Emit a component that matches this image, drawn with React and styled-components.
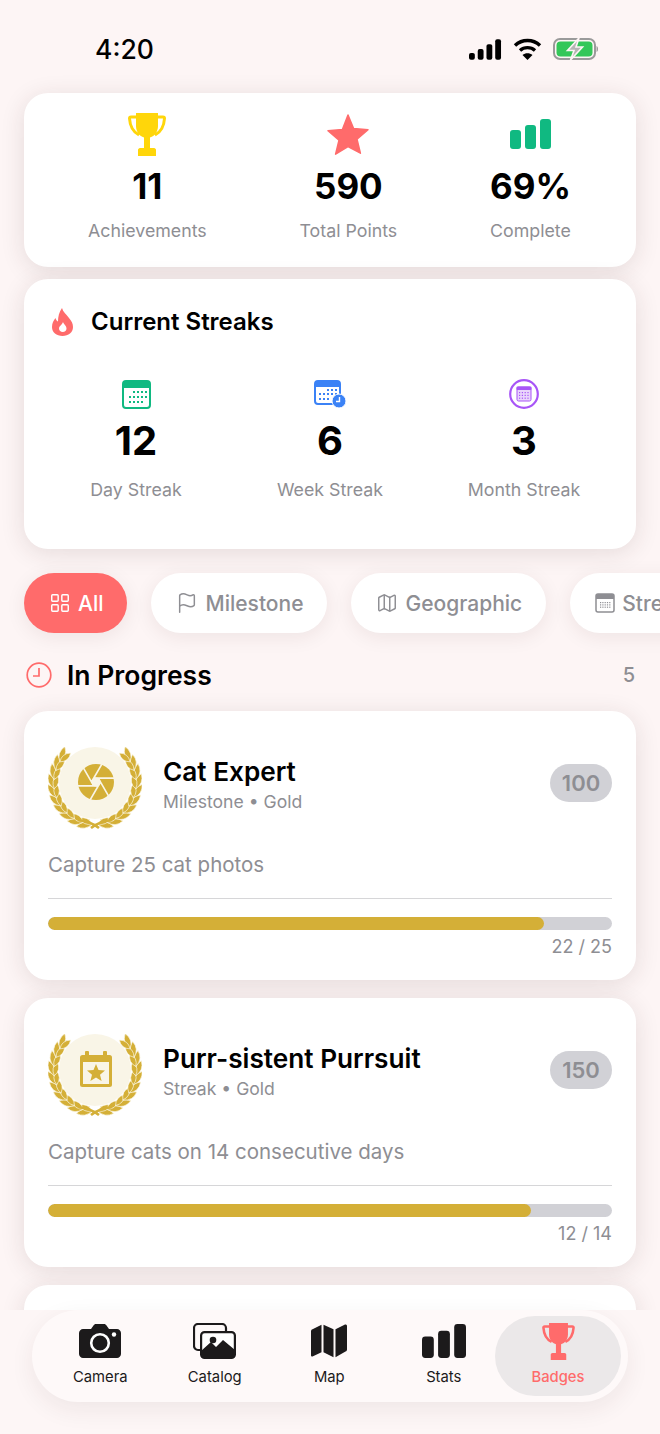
import React from 'react';
import styled, { createGlobalStyle } from 'styled-components';
import { LayoutGrid, Flag, Map as MapIcon } from 'lucide-react';

const GOLD = '#d4af37';
const CREAM = '#f9f5e7';
const CORAL = '#ff6b6b';

const GlobalStyle = createGlobalStyle`
	html, body {
		margin: 0;
		padding: 0;
		background: #fdf5f5;
	}
	* {
		box-sizing: border-box;
	}
`;

const Page = styled.div`
	position: relative;
	width: 660px;
	height: 1434px;
	overflow: hidden;
	background: #fdf5f5;
	font-family: Inter, 'Noto Sans', sans-serif;
	color: #000;
`;

const StatusBar = styled.div`
	height: 93px;
	padding: 34px 61px 0 95px;
	display: flex;
	justify-content: space-between;
	align-items: flex-start;
`;

const Time = styled.div`
	font-size: 26.5px;
	line-height: 30px;
	font-weight: 500;
`;

const StatusIcons = styled.div`
	display: flex;
	align-items: center;
	gap: 11px;
	padding-top: 4px;
`;

const Card = styled.div`
	margin: 0 24px;
	background: #fff;
	border-radius: 24px;
	box-shadow: 0 4px 24px rgba(60, 30, 30, 0.12);
`;

const SummaryCard = styled(Card)`
	height: 174px;
	padding: 19px 65px 0 64px;
	display: flex;
	justify-content: space-between;
`;

const Summary = styled.div`
	display: flex;
	flex-direction: column;
	align-items: center;
`;

const IconSlot = styled.div`
	height: 44px;
	display: flex;
	align-items: center;
	justify-content: center;
`;

const SummaryValue = styled.div`
	font-size: 35px;
	line-height: 42px;
	font-weight: 700;
	margin-top: 9px;
`;

const Label = styled.div`
	font-size: 17.8px;
	line-height: 22px;
	font-weight: 400;
	color: #8e8e93;
	margin-top: ${(p) => p.$top || 13}px;
`;

const StreakCard = styled(Card)`
	height: 270px;
	margin-top: 12px;
	padding: 28px 15px 0;
`;

const StreakTitle = styled.div`
	display: flex;
	align-items: center;
	gap: 17px;
	padding-left: 13px;
	font-size: 24px;
	line-height: 30px;
	font-weight: 600;
`;

const StreakGrid = styled.div`
	display: grid;
	grid-template-columns: repeat(3, 1fr);
	margin-top: 41px;
`;

const Streak = styled.div`
	display: flex;
	flex-direction: column;
	align-items: center;
`;

const StreakIcon = styled.div`
	height: 32px;
	display: flex;
	align-items: center;
	justify-content: center;
`;

const StreakValue = styled.div`
	font-size: 40px;
	line-height: 48px;
	font-weight: 700;
	margin-top: 7px;
`;

const ChipRow = styled.div`
	display: flex;
	gap: 24px;
	padding: 24px 0 20px 24px;
	overflow: hidden;
`;

const Chip = styled.div`
	flex-shrink: 0;
	height: 60px;
	padding: 0 24px 0 25px;
	display: flex;
	align-items: center;
	gap: 7px;
	border-radius: 30px;
	font-size: 21px;
	font-weight: 500;
	color: ${(p) => (p.$active ? '#fff' : '#8e8e93')};
	background: ${(p) => (p.$active ? CORAL : '#fff')};
	box-shadow: 0 4px 20px rgba(60, 30, 30, 0.08);
`;

const SectionHead = styled.div`
	display: flex;
	align-items: center;
	gap: 15px;
	height: 44px;
	padding: 0 25px 0 26px;
	margin-bottom: 14px;
	font-size: 26.5px;
	font-weight: 600;
`;

const Count = styled.span`
	margin-left: auto;
	font-size: 20px;
	font-weight: 500;
	color: #8e8e93;
`;

const BadgeCard = styled(Card)`
	height: 269px;
	margin-bottom: 18px;
	padding: 36px 24px 0;
`;

const BadgeTop = styled.div`
	display: flex;
	align-items: flex-start;
`;

const BadgeText = styled.div`
	margin-left: 21px;
	padding-top: 7px;
`;

const BadgeName = styled.div`
	font-size: 26.2px;
	line-height: 36px;
	font-weight: 600;
`;

const BadgeMeta = styled.div`
	font-size: 17.6px;
	line-height: 24px;
	color: #8e8e93;
`;

const Points = styled.div`
	margin-left: auto;
	margin-top: 17px;
	height: 38px;
	width: 62px;
	border-radius: 19px;
	background: #d1d1d6;
	color: #8e8e93;
	font-size: 22px;
	font-weight: 600;
	display: flex;
	align-items: center;
	justify-content: center;
`;

const Description = styled.div`
	font-size: 20.5px;
	line-height: 26px;
	color: #8e8e93;
	margin-top: 23px;
`;

const Divider = styled.div`
	height: 1px;
	background: #d6d6d8;
	margin-top: 20px;
`;

const Track = styled.div`
	height: 13px;
	border-radius: 7px;
	background: #d1d1d6;
	margin-top: 18px;
	overflow: hidden;
`;

const Fill = styled.div`
	height: 100%;
	border-radius: 7px;
	background: ${GOLD};
`;

const Progress = styled.div`
	font-size: 18px;
	line-height: 22px;
	color: #8e8e93;
	text-align: right;
	margin-top: 6px;
`;

const BottomArea = styled.div`
	position: absolute;
	left: 0;
	right: 0;
	bottom: 0;
	height: 124px;
	background: #fdf6f6;
`;

const TabPill = styled.div`
	margin-left: 32px;
	width: 596px;
	height: 92px;
	padding: 6px 0 6px 11px;
	display: flex;
	border-radius: 46px;
	background: #fef9f9;
	box-shadow: 0 8px 24px rgba(60, 30, 30, 0.07);
`;

const Tab = styled.div`
	width: ${(p) => (p.$active ? 126 : 114.5)}px;
	margin: 0 ${(p) => (p.$active ? -6 : 0)}px;
	display: flex;
	flex-direction: column;
	align-items: center;
	justify-content: flex-start;
	padding-top: 4px;
	border-radius: 40px;
	background: ${(p) => (p.$active ? '#ebe8e9' : 'transparent')};
	color: ${(p) => (p.$active ? CORAL : '#1c1a1b')};
	font-size: 14.8px;
	font-weight: ${(p) => (p.$active ? 500 : 400)};
`;

const TabIcon = styled.div`
	height: 42px;
	display: flex;
	align-items: center;
	justify-content: center;
`;

const TabLabel = styled.div`
	line-height: 18px;
	margin-top: 6px;
`;

const Signal = () => (
	<svg width="33" height="21" viewBox="0 0 34 21">
		<rect x="0" y="14" width="6" height="7" rx="2" fill="#000" />
		<rect x="9" y="10" width="6" height="11" rx="2" fill="#000" />
		<rect x="18" y="5" width="6" height="16" rx="2" fill="#000" />
		<rect x="27" y="0" width="6" height="21" rx="2" fill="#000" />
	</svg>
);

const Wifi = () => (
	<svg width="29" height="22" viewBox="0 0 28 22" fill="none" stroke="#000" strokeWidth="3.4">
		<path d="M1.5 7.5C8.5 .8 19.5 .8 26.5 7.5" />
		<path d="M6.5 12.5c4.2-3.8 10.8-3.8 15 0" />
		<path d="M14 22l-5-5c2.8-2.4 7.2-2.4 10 0z" fill="#000" stroke="none" />
	</svg>
);

const Battery = () => (
	<svg width="46" height="22" viewBox="0 0 46 22">
		<rect x="1" y="1" width="41" height="20" rx="6" fill="none" stroke="#9a9a9a" strokeWidth="2" />
		<rect x="3.5" y="3.5" width="36" height="15" rx="4" fill="#34c759" />
		<path d="M43.5 8c2 .5 2 5.500 0 6z" fill="#9a9a9a" />
		<path d="M26 0L14.500 12.500H21L17.500 22 29.500 9H23z" fill="#b5b5b5" stroke="#fdf5f5" strokeWidth="1.600" />
	</svg>
);

const Trophy = ({ color, width = 38, height = 43 }) => (
	<svg width={width} height={height} viewBox="0 0 38 43">
		<path d="M8 0h22v13c0 7-5 12-11 12S8 20 8 13z" fill={color} />
		<path
			d="M9 4H3c-1 0-1.500.5-1.500 1.500C2 13 5 19 11 22M29 4h6c1 0 1.500.5 1.500 1.500C36 13 33 19 27 22"
			fill="none"
			stroke={color}
			strokeWidth="3"
		/>
		<rect x="16" y="23" width="6" height="12" fill={color} />
		<path d="M10 43v-6c0-1 .8-2 2-2h14c1.200 0 2 1 2 2v6z" fill={color} />
	</svg>
);

const Star = () => (
	<svg width="42" height="41" viewBox="0 0 42 41">
		<path
			d="M21 1l5.600 13.600 14.400 1.100-11 9.400 3.400 14.100L21 32.600 8.600 40.200 12 26.100 1 16.700l14.400-1.100z"
			fill={CORAL}
			stroke={CORAL}
			strokeWidth="1.500"
			strokeLinejoin="round"
		/>
	</svg>
);

const Bars = ({ color, width = 41, height = 30, radius = 3 }) => (
	<svg width={width} height={height} viewBox="0 0 41 30" preserveAspectRatio="none">
		<rect x="0" y="11" width="11" height="19" rx={radius} fill={color} />
		<rect x="15" y="6" width="11" height="24" rx={radius} fill={color} />
		<rect x="30" y="0" width="11" height="30" rx={radius} fill={color} />
	</svg>
);

const Flame = () => (
	<svg width="22" height="28" viewBox="0 0 22 28">
		<path
			d="M10 0c1 4 4 6 7 10 2.500 3 4 5.500 4 9 0 5.500-4.500 9-10.500 9S0 24.500 0 19c0-4 1.500-6.500 3.500-9 .5 2 1.300 3 2.500 3.500C6 9 7 4 10 0z"
			fill={CORAL}
		/>
		<path d="M11 14c.6 2 3.500 3.500 3.500 6.500 0 2.200-1.600 3.500-3.700 3.500S7 22.700 7 20.500c0-2.500 3-3.500 4-6.500z" fill="#fff" />
	</svg>
);

const dots = (x0, y0, cols, rows, step, r, fill) => {
	const out = [];
	for (let j = 0; j < rows; j++) {
		for (let i = 0; i < cols; i++) {
			out.push(<rect key={`${i}-${j}`} x={x0 + i * step} y={y0 + j * step} width={r} height={r} fill={fill} />);
		}
	}
	return out;
};

const CalendarDay = () => (
	<svg width="29" height="29" viewBox="0 0 29 29">
		<rect x="1" y="1" width="27" height="27" rx="3" fill="#fff" stroke="#10b981" strokeWidth="2" />
		<path d="M1 8V4a3 3 0 0 1 3-3h21a3 3 0 0 1 3 3v4z" fill="#10b981" />
		{dots(11, 11, 4, 1, 4, 2, '#10b981')}
		{dots(7, 16, 5, 1, 4, 2, '#10b981')}
		{dots(7, 21, 4, 1, 4, 2, '#10b981')}
	</svg>
);

const CalendarWeek = () => (
	<svg width="32" height="28" viewBox="0 0 32 28">
		<rect x="1" y="1" width="25" height="23" rx="3" fill="#fff" stroke="#3b82f6" strokeWidth="2" />
		<path d="M1 7V4a3 3 0 0 1 3-3h19a3 3 0 0 1 3 3v3z" fill="#3b82f6" />
		{dots(13, 9, 3, 1, 4, 2, '#3b82f6')}
		{dots(5, 13, 5, 1, 4, 2, '#3b82f6')}
		{dots(5, 18, 3, 1, 4, 2, '#3b82f6')}
		<circle cx="25" cy="21" r="7" fill="#3b82f6" stroke="#fff" strokeWidth="1" />
		<path d="M25.500 17v4.500H22" fill="none" stroke="#fff" strokeWidth="1.400" />
	</svg>
);

const CalendarMonth = () => (
	<svg width="30" height="30" viewBox="0 0 30 30">
		<circle cx="15" cy="15" r="13.800" fill="#fff" stroke="#a855f7" strokeWidth="2.200" />
		<rect x="8" y="8" width="14" height="14" rx="1.500" fill="#e9d5fb" stroke="#a855f7" strokeWidth="1" />
		<rect x="7.500" y="7.500" width="15" height="3.500" rx="1" fill="#a855f7" />
		{dots(10, 13, 4, 3, 2.800, 1.200, '#a855f7')}
	</svg>
);

const CalendarChip = () => (
	<svg width="20" height="20" viewBox="0 0 20 20">
		<rect x="1" y="1" width="18" height="18" rx="2" fill="#fff" stroke="#8e8e93" strokeWidth="1.500" />
		<path d="M1 6V3a2 2 0 0 1 2-2h14a2 2 0 0 1 2 2v3z" fill="#8e8e93" />
		{dots(5, 9, 5, 3, 2.300, 1.200, '#8e8e93')}
	</svg>
);

const ProgressClock = () => (
	<svg width="26" height="26" viewBox="0 0 26 26" fill="none" stroke={CORAL} strokeWidth="1.700">
		<circle cx="13" cy="13" r="11.800" />
		<path d="M13 6v8H7" />
	</svg>
);

// one laurel leaf, a lens from base to tip
const leaf = (x, y, angle, len, width) => {
	const rad = (angle * Math.PI) / 180;
	const tipX = x + Math.cos(rad) * len;
	const tipY = y + Math.sin(rad) * len;
	const nx = -Math.sin(rad) * width;
	const ny = Math.cos(rad) * width;
	const midX = (x + tipX) / 2;
	const midY = (y + tipY) / 2;
	const f = (n) => n.toFixed(2);
	return `M${f(x)} ${f(y)}Q${f(midX + nx)} ${f(midY + ny)} ${f(tipX)} ${f(tipY)}Q${f(midX - nx)} ${f(midY - ny)} ${f(x)} ${f(y)}z`;
};

// leaves run along an arc, the left side is the same group mirrored
const wreathLeaves = () => {
	const out = [];
	const R = 41;
	for (let i = 0; i < 10; i++) {
		const a = 176 - i * 13;
		const rad = (a * Math.PI) / 180;
		const x = 47 + Math.sin(rad) * R;
		const y = 36 - Math.cos(rad) * R;
		const tangent = a - 180;
		out.push(leaf(x, y, tangent + 13, 16, 6));
		out.push(leaf(x, y, tangent - 20, 14, 5.5));
	}
	return out;
};

const LEAVES = wreathLeaves();

const Laurel = () => (
	<g fill={GOLD} stroke="#fbf6e4" strokeWidth="0.7">
		{LEAVES.map((d, i) => (
			<path key={i} d={d} />
		))}
	</g>
);

const Wreath = ({ children }) => (
	<svg width="94" height="82" viewBox="0 0 94 82" style={{ flexShrink: 0 }}>
		<Laurel />
		<g transform="translate(94 0) scale(-1 1)">
			<Laurel />
		</g>
		<path d="M30 73c8 1 15 3 21 8M64 73c-8 1-15 3-21 8" fill="none" stroke={GOLD} strokeWidth="2.600" />
		<circle cx="47" cy="36" r="36" fill={CREAM} />
		{children}
	</svg>
);

const slitLines = () => {
	const out = [];
	for (let k = 0; k < 6; k++) {
		const a = (k * 60 * Math.PI) / 180;
		const b = ((k * 60 + 120) * Math.PI) / 180;
		const x = 12 + Math.cos(a) * 3;
		const y = 12 + Math.sin(a) * 3;
		out.push(`M${x.toFixed(2)} ${y.toFixed(2)}L${(x + Math.cos(b) * 14).toFixed(2)} ${(y + Math.sin(b) * 14).toFixed(2)}`);
	}
	return out.join('');
};

const SLITS = slitLines();

const Aperture = () => (
	<g transform="translate(30 17) scale(1.5)">
		<circle cx="12" cy="12" r="12" fill={GOLD} />
		<circle cx="12" cy="12" r="3" fill={CREAM} />
		<path d={SLITS} fill="none" stroke={CREAM} strokeWidth="1.100" />
	</g>
);

const CalendarStar = () => (
	<g>
		<rect x="32" y="21" width="32" height="32" rx="2.500" fill={GOLD} />
		<rect x="37" y="17" width="4" height="6" rx="1" fill={GOLD} />
		<rect x="55" y="17" width="4" height="6" rx="1" fill={GOLD} />
		<rect x="35" y="28" width="26" height="22" fill={CREAM} />
		<path d="M48 30l2.500 6 6.500.5-5 4.300 1.600 6.300-5.600-3.500-5.600 3.500 1.600-6.300-5-4.300 6.500-.5z" fill={GOLD} />
	</g>
);

const Camera = () => (
	<svg width="42" height="34" viewBox="0 0 42 34">
		<path
			d="M4 5h8l2.500-3.500c.6-1 1.500-1.500 2.500-1.500h8c1 0 1.900.5 2.500 1.500L30 5h8c2 0 4 2 4 4v21c0 2-2 4-4 4H4c-2 0-4-2-4-4V9c0-2 2-4 4-4z"
			fill="#1c1a1b"
		/>
		<circle cx="21" cy="19" r="8.800" fill="none" stroke="#fff" strokeWidth="2.600" />
		<circle cx="35" cy="10.500" r="2.200" fill="#fff" />
	</svg>
);

const Catalog = () => (
	<svg width="43" height="36" viewBox="0 0 43 36">
		<path d="M7 27H5a4 4 0 0 1-4-4V5a4 4 0 0 1 4-4h24a4 4 0 0 1 4 4v3" fill="none" stroke="#1c1a1b" strokeWidth="2.200" />
		<rect x="8.100" y="9.100" width="33.800" height="25.800" rx="3.500" fill="#fff" stroke="#1c1a1b" strokeWidth="2.200" />
		<path d="M8 31v-3l10-9 5 5 7-7 12 10v5c0 2-1 3-3 3H11c-2 0-3-1-3-4z" fill="#1c1a1b" />
		<circle cx="20" cy="17" r="3.300" fill="#1c1a1b" />
	</svg>
);

const MapTab = () => (
	<svg width="36" height="34" viewBox="0 0 36 42" preserveAspectRatio="none">
		<path d="M0 9c0-1 .5-2 1.500-2.500L10.500 1v34l-9 5c-.8.5-1.500 0-1.500-1z" fill="#1c1a1b" />
		<path d="M12.500 1l10 5.500V41l-10-6z" fill="#1c1a1b" />
		<path d="M24.500 6.500L33.500 1c1.200-.7 2.500 0 2.500 1.500v29c0 1-.5 2-1.500 2.500l-10 7z" fill="#1c1a1b" />
	</svg>
);

const summaries = [
	{ icon: <Trophy color="#ffd60a" />, value: '11', label: 'Achievements' },
	{ icon: <Star />, value: '590', label: 'Total Points' },
	{ icon: <Bars color="#10b981" />, value: '69%', label: 'Complete' },
];

const streaks = [
	{ icon: <CalendarDay />, value: '12', label: 'Day Streak' },
	{ icon: <CalendarWeek />, value: '6', label: 'Week Streak' },
	{ icon: <CalendarMonth />, value: '3', label: 'Month Streak' },
];

const badges = [
	{
		name: 'Cat Expert',
		meta: 'Milestone • Gold',
		points: 100,
		desc: 'Capture 25 cat photos',
		current: 22,
		total: 25,
		art: <Aperture />,
	},
	{
		name: 'Purr-sistent Purrsuit',
		meta: 'Streak • Gold',
		points: 150,
		desc: 'Capture cats on 14 consecutive days',
		current: 12,
		total: 14,
		art: <CalendarStar />,
	},
];

const tabs = [
	{ label: 'Camera', icon: <Camera /> },
	{ label: 'Catalog', icon: <Catalog /> },
	{ label: 'Map', icon: <MapTab /> },
	{ label: 'Stats', icon: <Bars color="#1c1a1b" width={44} height={34} radius={3} /> },
	{ label: 'Badges', icon: <Trophy color={CORAL} width={33} height={37} />, active: true },
];

export default function App() {
	return (
		<Page>
			<GlobalStyle />
			<StatusBar>
				<Time>4:20</Time>
				<StatusIcons>
					<Signal />
					<Wifi />
					<Battery />
				</StatusIcons>
			</StatusBar>

			<SummaryCard>
				{summaries.map((s) => (
					<Summary key={s.label}>
						<IconSlot>{s.icon}</IconSlot>
						<SummaryValue>{s.value}</SummaryValue>
						<Label>{s.label}</Label>
					</Summary>
				))}
			</SummaryCard>

			<StreakCard>
				<StreakTitle>
					<Flame />
					Current Streaks
				</StreakTitle>
				<StreakGrid>
					{streaks.map((s) => (
						<Streak key={s.label}>
							<StreakIcon>{s.icon}</StreakIcon>
							<StreakValue>{s.value}</StreakValue>
							<Label $top={14}>{s.label}</Label>
						</Streak>
					))}
				</StreakGrid>
			</StreakCard>

			<ChipRow>
				<Chip $active>
					<LayoutGrid size={22} strokeWidth={1.6} />
					All
				</Chip>
				<Chip>
					<Flag size={22} strokeWidth={1.6} />
					Milestone
				</Chip>
				<Chip>
					<MapIcon size={22} strokeWidth={1.6} />
					Geographic
				</Chip>
				<Chip>
					<CalendarChip />
					Streak
				</Chip>
			</ChipRow>

			<SectionHead>
				<ProgressClock />
				In Progress
				<Count>5</Count>
			</SectionHead>

			{badges.map((b) => (
				<BadgeCard key={b.name}>
					<BadgeTop>
						<Wreath>{b.art}</Wreath>
						<BadgeText>
							<BadgeName>{b.name}</BadgeName>
							<BadgeMeta>{b.meta}</BadgeMeta>
						</BadgeText>
						<Points>{b.points}</Points>
					</BadgeTop>
					<Description>{b.desc}</Description>
					<Divider />
					<Track>
						<Fill style={{ width: `${(b.current / b.total) * 100}%` }} />
					</Track>
					<Progress>
						{b.current} / {b.total}
					</Progress>
				</BadgeCard>
			))}
			<BadgeCard />

			<BottomArea>
				<TabPill>
					{tabs.map((t) => (
						<Tab key={t.label} $active={t.active}>
							<TabIcon>{t.icon}</TabIcon>
							<TabLabel>{t.label}</TabLabel>
						</Tab>
					))}
				</TabPill>
			</BottomArea>
		</Page>
	);
}
